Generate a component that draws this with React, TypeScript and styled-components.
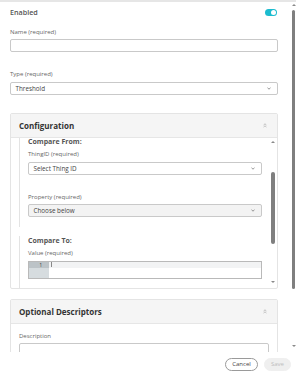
import styled, { createGlobalStyle } from "styled-components";

const GlobalStyle = createGlobalStyle`
  html, body {
    margin: 0;
    padding: 0;
    background: #fff;
  }
  body {
    font-family: "Open Sans", "Liberation Sans", sans-serif;
  }
  * {
    box-sizing: border-box;
  }
`;

const Page = styled.div`
  width: 296px;
  height: 376px;
  display: flex;
  flex-direction: column;
  overflow: hidden;
  background: #fff;
`;

const ScrollArea = styled.div`
  height: 352px;
  display: flex;
  border-top: 2px solid #e6e6e6;
`;

const Content = styled.div`
  flex: 1;
  min-width: 0;
  overflow: hidden;
  padding: 4px 13px 0 10px;
`;

/* fake scrollbars */
const Track = styled.div<{ $width: number; $right?: number }>`
  width: ${(p) => p.$width}px;
  margin-right: ${(p) => p.$right ?? 0}px;
  flex: none;
  display: flex;
  flex-direction: column;
  align-items: center;
`;

const ArrowUp = styled.div<{ $gap: number }>`
  margin-top: ${(p) => p.$gap}px;
  width: 0;
  height: 0;
  border-left: 2px solid transparent;
  border-right: 2px solid transparent;
  border-bottom: 2px solid #8a8a8a;
`;

const ArrowDown = styled.div<{ $gap: number }>`
  margin-top: auto;
  margin-bottom: ${(p) => p.$gap}px;
  width: 0;
  height: 0;
  border-left: 2px solid transparent;
  border-right: 2px solid transparent;
  border-top: 2px solid #8a8a8a;
`;

const Thumb = styled.div<{ $top: number; $height: number }>`
  margin-top: ${(p) => p.$top}px;
  height: ${(p) => p.$height}px;
  width: 3.5px;
  border-radius: 2px;
  background: #7f7f7f;
`;

const EnabledRow = styled.div`
  height: 12px;
  display: flex;
  align-items: center;
  justify-content: space-between;
`;

const EnabledText = styled.span`
  font-size: 7.2px;
  font-weight: 600;
  color: #555;
`;

const Toggle = styled.div`
  width: 12px;
  height: 7px;
  margin-right: 1px;
  border-radius: 4px;
  background: #1cbccf;
  display: flex;
  align-items: center;
  justify-content: flex-end;
  padding-right: 1px;

  &::after {
    content: "";
    width: 5px;
    height: 5px;
    border-radius: 50%;
    background: #fff;
  }
`;

const Label = styled.div<{ $mt: number }>`
  margin-top: ${(p) => p.$mt}px;
  height: 8px;
  line-height: 8px;
  font-size: 6px;
  color: #666;
  white-space: nowrap;
`;

const Input = styled.div<{ $mt: number; $h?: number }>`
  margin-top: ${(p) => p.$mt}px;
  height: ${(p) => p.$h ?? 13}px;
  border: 1px solid #c9c9c9;
  border-radius: 2px;
  background: #fff;
`;

const Select = styled.div<{ $mt: number; $muted?: boolean }>`
  margin-top: ${(p) => p.$mt}px;
  height: 13px;
  border: 1px solid #c9c9c9;
  border-radius: 2px;
  background: ${(p) => (p.$muted ? "#f3f3f3" : "#fff")};
  display: flex;
  align-items: center;
  justify-content: space-between;
  padding: 0 6px 0 4.5px;
  font-size: 6.3px;
  color: #444;
`;

const Card = styled.div<{ $mt: number }>`
  margin-top: ${(p) => p.$mt}px;
  border: 1px solid #e4e4e4;
  border-radius: 2px;
  overflow: hidden;
`;

const CardHeader = styled.div`
  height: 24px;
  background: #f5f5f5;
  border-bottom: 1px solid #e6e6e6;
  display: flex;
  align-items: center;
  justify-content: space-between;
  padding: 0 10px 0 8px;
  font-size: 8px;
  font-weight: 700;
  color: #333;
`;

const ConfigBody = styled.div`
  height: 150px;
  display: flex;
  padding-left: 8px;
`;

const InnerContent = styled.div`
  flex: 1;
  min-width: 0;
  overflow: hidden;
  padding-right: 8px;
`;

const Group = styled.div<{ $mt: number; $pt: number; $pb: number }>`
  margin-top: ${(p) => p.$mt}px;
  padding: ${(p) => p.$pt}px 0 ${(p) => p.$pb}px 8px;
  border-left: 1px solid #e3e3e3;
`;

const GroupTitle = styled.div`
  height: 8px;
  line-height: 8px;
  font-size: 7px;
  font-weight: 700;
  color: #555;
`;

const Editor = styled.div`
  margin-top: 4px;
  height: 18px;
  border: 1px solid #b9b9b9;
  display: flex;
`;

const Gutter = styled.div`
  width: 20px;
  background: #d6dcdf;
  display: flex;
  flex-direction: column;
`;

const GutterLine = styled.div`
  height: 6px;
  line-height: 6px;
  background: #bcc3c7;
  font-size: 4.5px;
  color: #333;
  text-align: right;
  padding-right: 7px;
`;

const CodeArea = styled.div`
  flex: 1;
  display: flex;
  flex-direction: column;
`;

const ActiveLine = styled.div`
  height: 6px;
  background: #f2f3f4;
  padding-left: 2px;
  display: flex;
  align-items: center;

  &::before {
    content: "";
    width: 0.8px;
    height: 5px;
    background: #888;
  }
`;

const OptionalBody = styled.div`
  padding: 8px 8px 0 8px;
`;

const Footer = styled.div`
  height: 24px;
  display: flex;
  align-items: center;
  justify-content: flex-end;
  gap: 6px;
  padding-right: 5px;
`;

const Button = styled.div<{ $primary?: boolean }>`
  height: 13px;
  width: ${(p) => (p.$primary ? 27 : 33)}px;
  border-radius: 7px;
  display: flex;
  align-items: center;
  justify-content: center;
  font-size: 6px;
  color: ${(p) => (p.$primary ? "#bdbdbd" : "#444")};
  background: ${(p) => (p.$primary ? "#efefef" : "#fff")};
  border: 1px solid ${(p) => (p.$primary ? "#efefef" : "#9a9a9a")};
`;

function Chevron() {
  return (
    <svg width="4" height="3" viewBox="0 0 4 3">
      <polyline
        points="0.5,0.8 2,2.2 3.5,0.8"
        fill="none"
        stroke="#666"
        strokeWidth="0.7"
      />
    </svg>
  );
}

function CollapseIcon() {
  return (
    <svg width="4" height="5" viewBox="0 0 4 5">
      <g fill="none" stroke="#9a9a9a" strokeWidth="0.6">
        <polyline points="0.6,2 2,0.8 3.4,2" />
        <polyline points="0.6,4 2,2.8 3.4,4" />
      </g>
    </svg>
  );
}

export default function App() {
  return (
    <Page>
      <GlobalStyle />
      <ScrollArea>
        <Content>
          <EnabledRow>
            <EnabledText>Enabled</EnabledText>
            <Toggle />
          </EnabledRow>

          <Label $mt={9.7}>Name (required)</Label>
          <Input $mt={3.3} />

          <Label $mt={18}>Type (required)</Label>
          <Select $mt={4}>
            <span>Threshold</span>
            <Chevron />
          </Select>

          <Card $mt={18}>
            <CardHeader>
              <span>Configuration</span>
              <CollapseIcon />
            </CardHeader>
            <ConfigBody>
              <InnerContent>
                <Group $mt={0} $pt={0} $pb={10}>
                  <GroupTitle>Compare From:</GroupTitle>
                  <Label $mt={4}>ThingID (required)</Label>
                  <Select $mt={4}>
                    <span>Select Thing ID</span>
                    <Chevron />
                  </Select>
                  <Label $mt={18}>Property (required)</Label>
                  <Select $mt={3} $muted>
                    <span>Choose below</span>
                    <Chevron />
                  </Select>
                </Group>
                <Group $mt={9} $pt={1} $pb={20}>
                  <GroupTitle>Compare To:</GroupTitle>
                  <Label $mt={4}>Value (required)</Label>
                  <Editor>
                    <Gutter>
                      <GutterLine>1</GutterLine>
                    </Gutter>
                    <CodeArea>
                      <ActiveLine />
                    </CodeArea>
                  </Editor>
                </Group>
              </InnerContent>
              <Track $width={6} $right={1}>
                <ArrowUp $gap={3.5} />
                <Thumb $top={28.5} $height={72} />
                <ArrowDown $gap={5} />
              </Track>
            </ConfigBody>
          </Card>

          <Card $mt={10}>
            <CardHeader>
              <span>Optional Descriptors</span>
              <CollapseIcon />
            </CardHeader>
            <OptionalBody>
              <Label $mt={0}>Description</Label>
              <Input $mt={3} $h={30} />
            </OptionalBody>
          </Card>
        </Content>
        <Track $width={5}>
          <ArrowUp $gap={2} />
          <Thumb $top={4} $height={279} />
          <ArrowDown $gap={5} />
        </Track>
      </ScrollArea>
      <Footer>
        <Button>Cancel</Button>
        <Button $primary>Save</Button>
      </Footer>
    </Page>
  );
}
